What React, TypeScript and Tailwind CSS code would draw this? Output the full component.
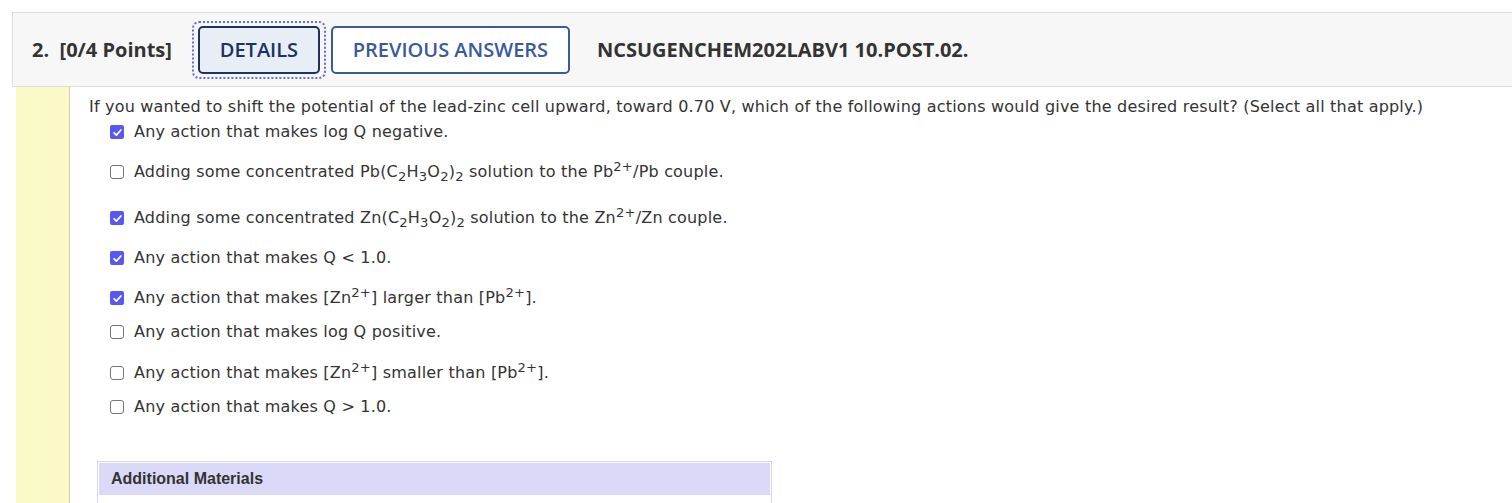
import React from "react";

type Row = { checked: boolean; h: string; content: React.ReactNode };

function Box({ checked }: { checked: boolean }) {
  if (checked) {
    return (
      <span className="inline-flex items-center justify-center w-[14px] h-[14px] rounded-[2px] bg-[#5757f2] shrink-0">
        <svg viewBox="0 0 12 12" className="w-[11px] h-[11px]">
          <path d="M2.3 6.3 L4.8 8.8 L9.7 3.3" fill="none" stroke="#fff" strokeWidth="1.9" strokeLinecap="round" strokeLinejoin="round" />
        </svg>
      </span>
    );
  }
  return <span className="inline-block w-[14px] h-[14px] rounded-[3px] border border-[#767676] bg-white shrink-0" />;
}

const Sub = ({ children }: { children: React.ReactNode }) => (
  <sub className="text-[82%]" style={{ bottom: "-0.3em" }}>{children}</sub>
);
const Sup = ({ children }: { children: React.ReactNode }) => (
  <sup className="text-[82%]" style={{ top: "-0.45em" }}>{children}</sup>
);

const rows: Row[] = [
  { checked: true, h: "h-[40px]", content: <>Any action that makes log Q negative.</> },
  {
    checked: false,
    h: "h-[46px]",
    content: (
      <>
        Adding some concentrated Pb(C<Sub>2</Sub>H<Sub>3</Sub>O<Sub>2</Sub>)<Sub>2</Sub> solution to the Pb<Sup>2+</Sup>/Pb couple.
      </>
    ),
  },
  {
    checked: true,
    h: "h-[40px]",
    content: (
      <>
        Adding some concentrated Zn(C<Sub>2</Sub>H<Sub>3</Sub>O<Sub>2</Sub>)<Sub>2</Sub> solution to the Zn<Sup>2+</Sup>/Zn couple.
      </>
    ),
  },
  { checked: true, h: "h-[40px]", content: <>Any action that makes Q &lt; 1.0.</> },
  {
    checked: true,
    h: "h-[34px]",
    content: (
      <>
        Any action that makes [Zn<Sup>2+</Sup>] larger than [Pb<Sup>2+</Sup>].
      </>
    ),
  },
  { checked: false, h: "h-[41px]", content: <>Any action that makes log Q positive.</> },
  {
    checked: false,
    h: "h-[34px]",
    content: (
      <>
        Any action that makes [Zn<Sup>2+</Sup>] smaller than [Pb<Sup>2+</Sup>].
      </>
    ),
  },
  { checked: false, h: "h-[26px]", content: <>Any action that makes Q &gt; 1.0.</> },
];

export default function App() {
  return (
    <div className="w-[1512px] h-[503px] overflow-hidden bg-white pl-[12px] pt-[12px]">
      <div className="w-[1530px]">
        {/* question header */}
        <div className="h-[75px] border border-[#dddddd] bg-[#f7f7f7] flex items-center pl-[19px] font-['Open_Sans',sans-serif] text-[20px] text-[#333333]">
          <span className="font-bold whitespace-pre">2.  [0/4 Points]</span>
          <div className="ml-[20px] px-[6px] py-[5px] rounded-[7px] outline-2 outline-dotted outline-[#5b6cf0] -outline-offset-2">
            <button className="h-[48px] w-[122px] rounded-[5px] border-2 border-[#1e325f] bg-[#e8eef6] text-[#1e325f] font-semibold">
              DETAILS
            </button>
          </div>
          <button className="ml-[5px] h-[48px] w-[239px] rounded-[5px] border-2 border-[#3a5a9c] bg-white text-[#3a5a9c] font-semibold">
            PREVIOUS ANSWERS
          </button>
          <span className="ml-[27px] font-bold">NCSUGENCHEM202LABV1 10.POST.02.</span>
        </div>

        <div className="flex h-[420px]">
          <div className="ml-[4px] w-[54px] bg-[#fafac8] border-r border-[#cfcfb0]" />
          <div className="pl-[19px] font-['DejaVu_Sans',Verdana,sans-serif] text-[16px] text-[#333333]">
            <p className="h-[32px] leading-[26px] pt-[7px] tracking-[0.2px] whitespace-nowrap">
              If you wanted to shift the potential of the lead-zinc cell upward, toward 0.70 V, which of the following actions would give the desired result? (Select all that apply.)
            </p>
            <div className="pl-[21px]">
              {rows.map((r, i) => (
                <div key={i} className={r.h}>
                  <div className="h-[26px] flex items-center gap-[10px]">
                    <Box checked={r.checked} />
                    <span className="leading-[26px] tracking-[0.2px] whitespace-nowrap">{r.content}</span>
                  </div>
                </div>
              ))}
            </div>

            <div className="mt-[41px] ml-[8px] w-[675px] border border-[#d6d6f4] p-[1px]">
              <div className="h-[32px] bg-[#dadaf8] flex items-center pl-[12px] font-['Liberation_Sans',Arial,sans-serif] font-bold text-[16px] text-[#333333]">
                Additional Materials
              </div>
              <div className="h-[20px] bg-white" />
            </div>
          </div>
        </div>
      </div>
    </div>
  );
}
